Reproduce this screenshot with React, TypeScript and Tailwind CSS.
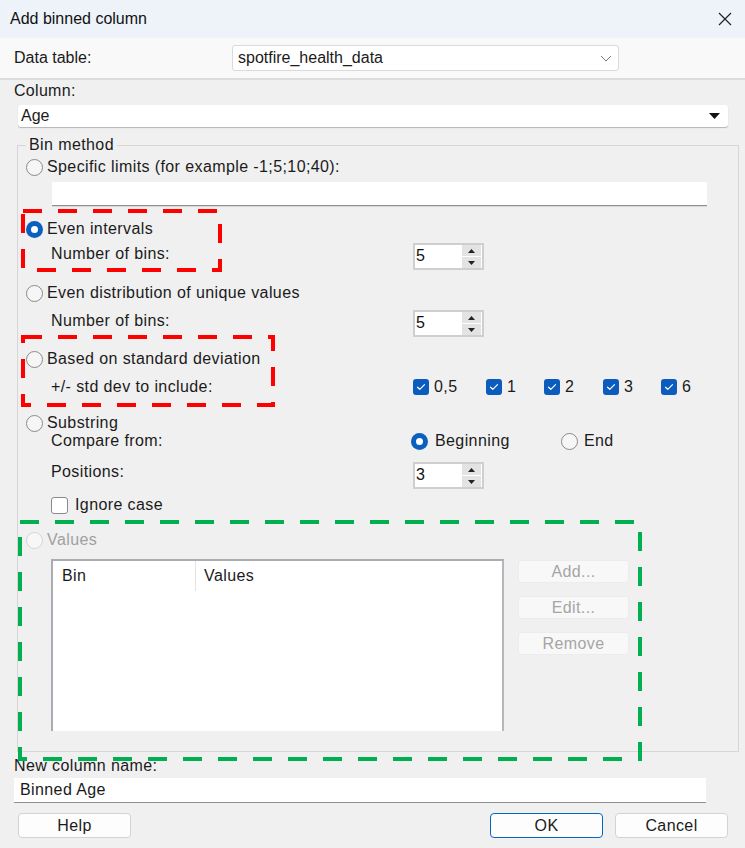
import React from 'react';

const font = "font-['Liberation_Sans',Arial,sans-serif]";

const Radio: React.FC<{ checked?: boolean; disabled?: boolean }> = ({ checked, disabled }) => {
  if (checked) {
    return (
      <span className="w-[17px] h-[17px] shrink-0 rounded-full bg-[#0a5fbf] flex items-center justify-center">
        <span className="w-[7px] h-[7px] rounded-full bg-white" />
      </span>
    );
  }
  return (
    <span
      className={`w-[17px] h-[17px] shrink-0 rounded-full border ${
        disabled ? 'border-[#d4d4d4] bg-[#f7f7f7]' : 'border-[#8a8a8a] bg-[#f6f6f6]'
      }`}
    />
  );
};

const Check: React.FC<{ checked?: boolean }> = ({ checked }) =>
  checked ? (
    <span className="w-[16px] h-[16px] shrink-0 rounded-[3px] bg-[#0b5cbd] flex items-center justify-center">
      <svg width="10" height="8" viewBox="0 0 10 8" fill="none">
        <path d="M1.5 4.2 L3.8 6.3 L8.5 1.6" stroke="white" strokeWidth="1.2" strokeLinecap="round" strokeLinejoin="round" />
      </svg>
    </span>
  ) : (
    <span className="w-[17px] h-[17px] shrink-0 rounded-[3px] border border-[#8a8a8a] bg-white" />
  );

const Spinner: React.FC<{ value: string }> = ({ value }) => (
  <div className="w-[71px] h-[27px] border-2 border-[#cfcfcf] bg-white flex items-start tracking-normal">
    <span className="flex-1 pl-[1px] leading-[22px] text-[16px] text-[#111]">{value}</span>
    <div className="w-[19px] h-[23px] flex flex-col gap-[1px] mr-[1px]">
      <span className="flex-1 bg-[#e3e3e3] flex items-center justify-center">
        <svg width="7" height="4" viewBox="0 0 7 4"><path d="M0 4 L3.5 0 L7 4 Z" fill="#222" /></svg>
      </span>
      <span className="flex-1 bg-[#e3e3e3] flex items-center justify-center">
        <svg width="7" height="4" viewBox="0 0 7 4"><path d="M0 0 L3.5 4 L7 0 Z" fill="#222" /></svg>
      </span>
    </div>
  </div>
);

// dashed highlight frame drawn over the form
const DashedBox: React.FC<{ w: number; h: number; color: string; className: string }> = ({ w, h, color, className }) => (
  <svg className={`absolute pointer-events-none ${className}`} width={w + 4} height={h + 4} viewBox={`-2 -2 ${w + 4} ${h + 4}`}>
    <rect x="0" y="0" width={w} height={h} fill="none" stroke={color} strokeWidth="4" strokeDasharray="19 16" />
  </svg>
);

const stdDevs = [
  { label: '0,5', w: 'w-[73px]' },
  { label: '1', w: 'w-[58px]' },
  { label: '2', w: 'w-[59px]' },
  { label: '3', w: 'w-[58px]' },
  { label: '6', w: 'w-[40px]' },
];

const App: React.FC = () => {
  return (
    <div className={`relative w-[745px] h-[848px] bg-[#f0f0f0] overflow-hidden text-[16px] tracking-[0.4px] text-[#1b1b1b] ${font}`}>
      {/* title bar */}
      <div className="h-[38px] bg-[#eef3f9] flex items-center justify-between pl-[10px] pr-[13px] tracking-normal">
        <span className="text-[16px] text-[#111]">Add binned column</span>
        <svg width="14" height="14" viewBox="0 0 14 14">
          <path d="M1 1 L13 13 M13 1 L1 13" stroke="#222" strokeWidth="1.2" />
        </svg>
      </div>

      {/* data table picker */}
      <div className="h-[42px] bg-[#f9f9f9] border-b-2 border-[#dcdcdc] flex items-center tracking-normal">
        <span className="w-[232px] pl-[14px]">Data table:</span>
        <div className="w-[387px] h-[26px] bg-white border border-[#dadada] rounded-[3px] flex items-center justify-between pl-[5px] pr-[6px]">
          <span>spotfire_health_data</span>
          <svg width="12" height="7" viewBox="0 0 12 7">
            <path d="M1 1 L6 6 L11 1" stroke="#7a7a7a" strokeWidth="1" fill="none" />
          </svg>
        </div>
      </div>

      {/* column picker */}
      <div className="pl-[14px] h-[20px] mt-[1px] leading-[20px] tracking-[0.3px]">Column:</div>
      <div className="ml-[18px] w-[710px] h-[22px] mt-[4px] bg-white rounded-[3px] shadow-[0_1px_1px_rgba(0,0,0,0.25)] flex items-center justify-between pl-[3px] pr-[8px] tracking-normal">
        <span>Age</span>
        <svg width="11" height="6" viewBox="0 0 11 6"><path d="M0 0 L11 0 L5.5 6 Z" fill="#111" /></svg>
      </div>

      {/* bin method group */}
      <div className="relative ml-[17px] w-[722px] mt-[18px] border border-[#d6d6d6] pl-[8px] pb-[20px]">
        <span className="absolute -top-[10px] left-[8px] px-[3px] bg-[#f0f0f0] leading-[18px]">Bin method</span>

        <div className="mt-[11px] h-[20px] flex items-center gap-[4px]">
          <Radio />
          <span>Specific limits (for example -1;5;10;40):</span>
        </div>
        <div className="ml-[26px] mt-[5px] w-[655px] h-[24px] bg-white border-b border-[#8f8f8f] shadow-[0_1px_0_#d9d9d9]" />

        <div className="mt-[13px] h-[20px] flex items-center gap-[4px]">
          <Radio checked />
          <span>Even intervals</span>
        </div>
        <div className="mt-[4px] h-[27px] flex items-center">
          <span className="w-[387px] pl-[25px] mb-[5px]">Number of bins:</span>
          <Spinner value="5" />
        </div>

        <div className="mt-[13px] h-[20px] flex items-center gap-[4px]">
          <Radio />
          <span>Even distribution of unique values</span>
        </div>
        <div className="mt-[7px] h-[27px] flex items-center">
          <span className="w-[387px] pl-[25px] mb-[6px]">Number of bins:</span>
          <Spinner value="5" />
        </div>

        <div className="mt-[12px] h-[20px] flex items-center gap-[4px]">
          <Radio />
          <span>Based on standard deviation</span>
        </div>
        <div className="mt-[8px] h-[20px] flex items-center">
          <span className="w-[387px] pl-[25px]">+/- std dev to include:</span>
          {stdDevs.map((s) => (
            <span key={s.label} className={`${s.w} flex items-center gap-[5px]`}>
              <Check checked />
              <span>{s.label}</span>
            </span>
          ))}
        </div>

        <div className="mt-[17px] h-[18px] flex items-center gap-[4px]">
          <Radio />
          <span>Substring</span>
        </div>
        <div className="h-[18px] flex items-center">
          <span className="w-[385px] pl-[25px]">Compare from:</span>
          <span className="w-[150px] flex items-center gap-[7px]">
            <Radio checked />
            <span>Beginning</span>
          </span>
          <span className="flex items-center gap-[6px]">
            <Radio />
            <span>End</span>
          </span>
        </div>
        <div className="mt-[12px] h-[27px] flex items-center">
          <span className="w-[387px] pl-[25px] mb-[7px]">Positions:</span>
          <Spinner value="3" />
        </div>
        <div className="mt-[6px] h-[20px] flex items-center gap-[7px] pl-[25px]">
          <Check />
          <span>Ignore case</span>
        </div>

        <div className="mt-[15px] h-[20px] flex items-center gap-[4px] text-[#a0a0a0]">
          <Radio disabled />
          <span>Values</span>
        </div>
        <div className="mt-[9px] flex items-start pl-[25px] gap-[14px]">
          <div className="w-[453px] h-[172px] bg-white border-l-2 border-t-2 border-r-2 border-[#a9adb3] border-r-[#b4b7bb]">
            <div className="flex h-[30px] items-center">
              <span className="w-[143px] pl-[9px] h-[30px] leading-[30px] border-r border-[#e3e3e3]">Bin</span>
              <span className="pl-[8px]">Values</span>
            </div>
          </div>
          <div className="flex flex-col gap-[13px] pt-[1px]">
            {['Add...', 'Edit...', 'Remove'].map((b) => (
              <span
                key={b}
                className="w-[111px] h-[23px] rounded-[3px] border border-[#ececec] bg-[#f8f8f8] text-[#a5a5a5] flex items-center justify-center"
              >
                {b}
              </span>
            ))}
          </div>
        </div>
      </div>

      {/* new column name */}
      <div className="pl-[14px] mt-[5px] h-[18px] leading-[18px]">New column name:</div>
      <div className="ml-[14px] mt-[3px] w-[692px] h-[25px] bg-white border-b border-[#8f8f8f] flex items-center pl-[6px]">
        Binned Age
      </div>

      <div className="mt-[10px] flex items-center pl-[18px]">
        <span className="w-[113px] h-[25px] rounded-[4px] border border-[#d3d3d3] bg-[#fdfdfd] flex items-center justify-center">
          Help
        </span>
        <span className="ml-[359px] w-[113px] h-[25px] rounded-[4px] border border-[#0067c0] bg-[#fdfdfd] flex items-center justify-center">
          OK
        </span>
        <span className="ml-[12px] w-[113px] h-[25px] rounded-[4px] border border-[#d3d3d3] bg-[#fdfdfd] flex items-center justify-center">
          Cancel
        </span>
      </div>

      {/* highlight frames */}
      <DashedBox w={197} h={59} color="#ff0000" className="left-[21px] top-[209px]" />
      <DashedBox w={250} h={68} color="#ff0000" className="left-[21px] top-[335px]" />
      <DashedBox w={620} h={237} color="#00b050" className="left-[18px] top-[520px]" />
    </div>
  );
};

export default App;
